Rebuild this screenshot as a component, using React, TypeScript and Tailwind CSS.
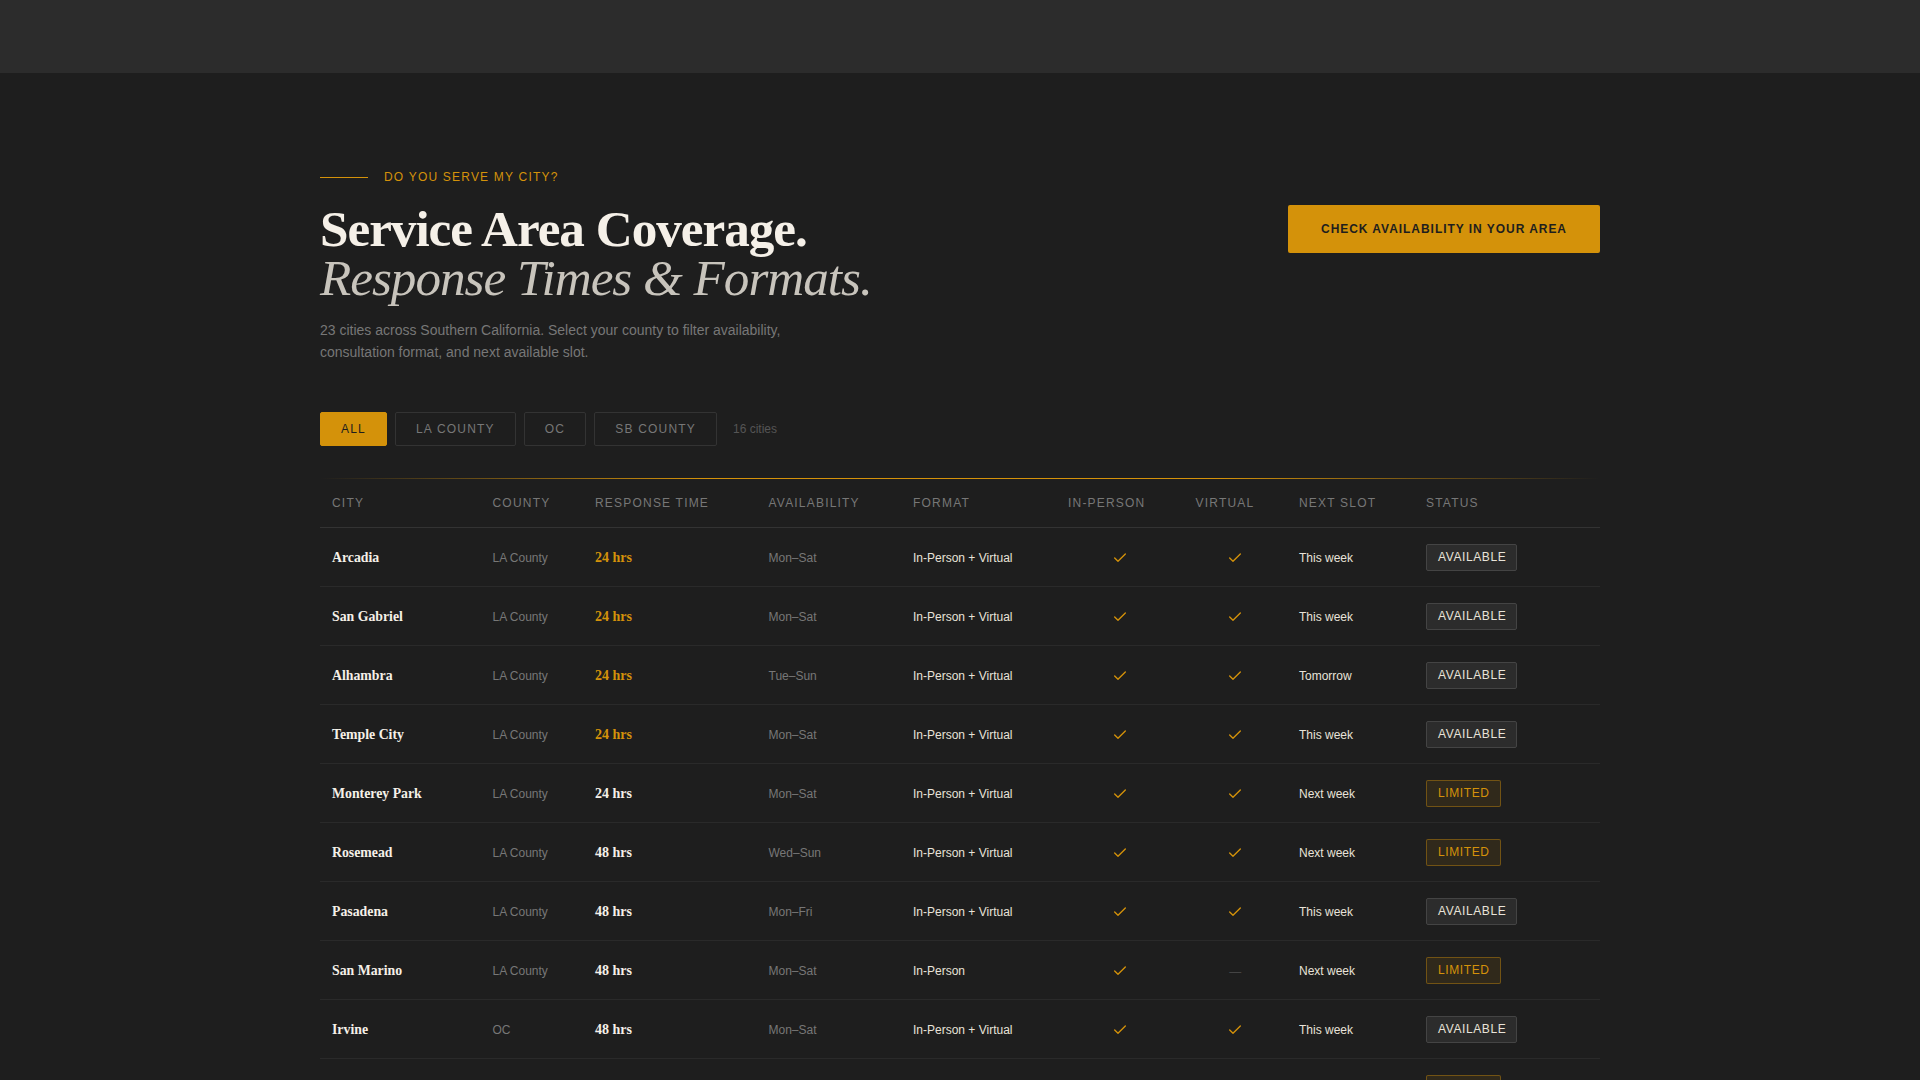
import { Check } from "lucide-react";

interface CityRow {
  city: string;
  county: string;
  response: string;
  fast: boolean;
  days: string;
  format: string;
  virtual: boolean;
  slot: string;
  status: "AVAILABLE" | "LIMITED";
}

const rows: CityRow[] = [
  { city: "Arcadia", county: "LA County", response: "24 hrs", fast: true, days: "Mon–Sat", format: "In-Person + Virtual", virtual: true, slot: "This week", status: "AVAILABLE" },
  { city: "San Gabriel", county: "LA County", response: "24 hrs", fast: true, days: "Mon–Sat", format: "In-Person + Virtual", virtual: true, slot: "This week", status: "AVAILABLE" },
  { city: "Alhambra", county: "LA County", response: "24 hrs", fast: true, days: "Tue–Sun", format: "In-Person + Virtual", virtual: true, slot: "Tomorrow", status: "AVAILABLE" },
  { city: "Temple City", county: "LA County", response: "24 hrs", fast: true, days: "Mon–Sat", format: "In-Person + Virtual", virtual: true, slot: "This week", status: "AVAILABLE" },
  { city: "Monterey Park", county: "LA County", response: "24 hrs", fast: false, days: "Mon–Sat", format: "In-Person + Virtual", virtual: true, slot: "Next week", status: "LIMITED" },
  { city: "Rosemead", county: "LA County", response: "48 hrs", fast: false, days: "Wed–Sun", format: "In-Person + Virtual", virtual: true, slot: "Next week", status: "LIMITED" },
  { city: "Pasadena", county: "LA County", response: "48 hrs", fast: false, days: "Mon–Fri", format: "In-Person + Virtual", virtual: true, slot: "This week", status: "AVAILABLE" },
  { city: "San Marino", county: "LA County", response: "48 hrs", fast: false, days: "Mon–Sat", format: "In-Person", virtual: false, slot: "Next week", status: "LIMITED" },
  { city: "Irvine", county: "OC", response: "48 hrs", fast: false, days: "Mon–Sat", format: "In-Person + Virtual", virtual: true, slot: "This week", status: "AVAILABLE" },
  { city: "Anaheim", county: "OC", response: "48 hrs", fast: false, days: "Mon–Fri", format: "In-Person + Virtual", virtual: true, slot: "Next week", status: "LIMITED" },
];

const headers = ["City", "County", "Response Time", "Availability", "Format", "In-Person", "Virtual", "Next Slot", "Status"];
const filters = ["LA County", "OC", "SB County"];
const serif = "font-['Liberation_Serif',serif]";

function Tick() {
  return <Check className="mx-auto text-[#d4920a]" size={16} strokeWidth={2} />;
}

export default function App() {
  return (
    <div className="h-[1080px] overflow-hidden bg-[#1e1e1e] font-['Liberation_Sans',Arial,sans-serif]">
      <div className="h-[73px] bg-[#2c2c2c]" />
      <section className="mx-auto w-[1280px] pt-[97px]">
        <div className="flex items-center gap-4">
          <div className="h-px w-12 bg-[#d4920a]" />
          <span className="text-xs leading-[14px] tracking-[0.1em] text-[#d4920a] uppercase">Do you serve my city?</span>
        </div>
        <div className="flex items-start justify-between">
          <div>
            <h1 className={`${serif} mt-5 text-[51.2px] leading-[49px] tracking-[-0.02em] text-[#f5f0e8]`}>
              <span className="block font-bold">Service Area Coverage.</span>
              <span className="block font-normal text-[#c8c4bc] italic">Response Times &amp; Formats.</span>
            </h1>
            <p className="mt-[17px] w-[480px] text-sm leading-[22px] text-[#777777]">
              23 cities across Southern California. Select your county to filter availability, consultation format, and next available slot.
            </p>
          </div>
          <button className="mt-[21px] h-[48px] w-[312px] rounded-[2px] bg-[#d4920a] text-xs font-bold tracking-[0.08em] text-[#1e1e1e] uppercase">
            Check availability in your area
          </button>
        </div>
        <div className="mt-[49px] flex items-center gap-2">
          <button className="h-[34px] rounded-[2px] border border-[#d4920a] bg-[#d4920a] px-5 text-xs tracking-[0.1em] text-[#1e1e1e] uppercase">All</button>
          {filters.map((f) => (
            <button key={f} className="h-[34px] rounded-[2px] border border-[#333333] px-5 text-xs tracking-[0.1em] text-[#777777] uppercase">
              {f}
            </button>
          ))}
          <span className="ml-2 text-xs text-[#555555]">16 cities</span>
        </div>
        <div className="mt-8 h-px bg-[linear-gradient(90deg,transparent,#d4920a_30%,#d4920a_70%,transparent)]" />
        <table className="w-full table-fixed border-collapse">
          <colgroup>
            <col className="w-[160.5px]" />
            <col className="w-[102.5px]" />
            <col className="w-[173.5px]" />
            <col className="w-[144.5px]" />
            <col className="w-[155px]" />
            <col className="w-[127.5px]" />
            <col className="w-[103.5px]" />
            <col className="w-[127px]" />
            <col />
          </colgroup>
          <thead>
            <tr className="h-[48px] border-b border-[#333333]">
              {headers.map((h) => (
                <th key={h} className="px-3 text-left text-xs font-normal tracking-[0.1em] text-[#777777] uppercase">
                  {h}
                </th>
              ))}
            </tr>
          </thead>
          <tbody>
            {rows.map((r) => (
              <tr key={r.city} className="h-[59px] border-b border-[#2a2a2a] [&>td]:pt-[2px]">
                <td className={`${serif} px-3 text-[13.8px] leading-5 font-bold text-[#f5f0e8]`}>{r.city}</td>
                <td className="px-3 text-xs text-[#777777]">{r.county}</td>
                <td className={`${serif} px-3 text-sm font-bold ${r.fast ? "text-[#d4920a]" : "text-[#f5f0e8]"}`}>{r.response}</td>
                <td className="px-3 text-xs text-[#777777]">{r.days}</td>
                <td className="px-3 text-xs text-[#e8e3d9]">{r.format}</td>
                <td className="px-3 text-center"><Tick /></td>
                <td className="px-3 text-center">
                  {r.virtual ? <Tick /> : <span className="text-xs text-[#444444]">—</span>}
                </td>
                <td className="px-3 text-xs text-[#e8e3d9]">{r.slot}</td>
                <td className="px-3">
                  {r.status === "AVAILABLE" ? (
                    <span className="inline-block rounded-[2px] border border-[#444444] bg-[#2c2c2c] py-[5px] pr-[10px] pl-[11px] text-xs leading-[15px] tracking-[0.05em] text-[#e8e3d9]">
                      AVAILABLE
                    </span>
                  ) : (
                    <span className="inline-block rounded-[2px] border border-[#d4920a]/40 bg-[#d4920a]/10 py-[5px] pr-[10px] pl-[11px] text-xs leading-[15px] tracking-[0.05em] text-[#d4920a]">
                      LIMITED
                    </span>
                  )}
                </td>
              </tr>
            ))}
          </tbody>
        </table>
      </section>
    </div>
  );
}
